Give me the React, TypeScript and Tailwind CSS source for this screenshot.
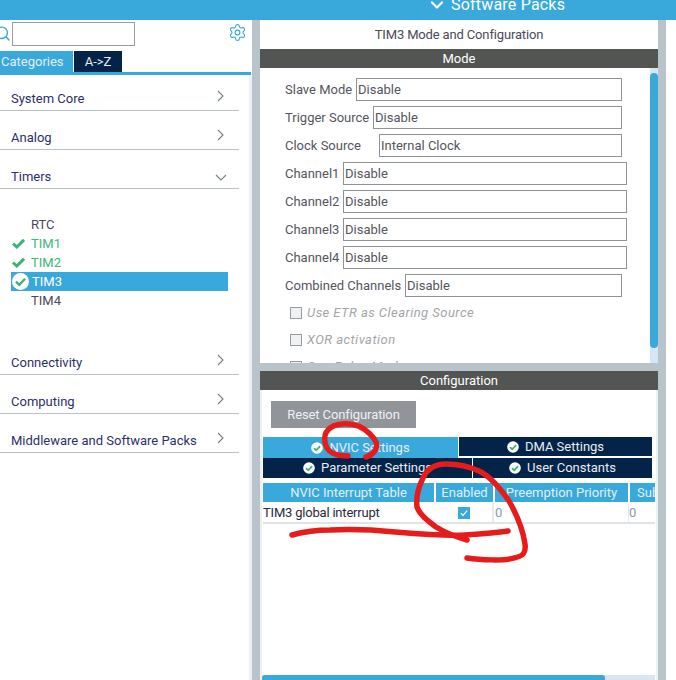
import React from "react";
import { Search, Settings, ChevronDown } from "lucide-react";

const font = { fontFamily: "Roboto, 'Liberation Sans', sans-serif" };

function Category({ name, open, mt }: { name: string; open?: boolean; mt: string }) {
  return (
    <div className={`flex h-[20px] w-[239px] items-center justify-between border-b border-[#b8c3ca] box-content pb-[1px] ${mt}`}>
      <span className="pl-[11px] text-[13px] text-[#2c2f6c]">{name}</span>
      {open ? (
        <svg viewBox="0 0 12 7" className="mr-[12px] h-[7px] w-[12px] text-[#7a7d80]">
          <path d="M1 1 L6 6 L11 1" fill="none" stroke="currentColor" strokeWidth="1.1" />
        </svg>
      ) : (
        <svg viewBox="0 0 7 12" className="mr-[15px] -mt-[6px] h-[12px] w-[7px] text-[#7a7d80]">
          <path d="M1 1 L6 6 L1 11" fill="none" stroke="currentColor" strokeWidth="1.1" />
        </svg>
      )}
    </div>
  );
}

function Check({ className }: { className: string }) {
  return (
    <svg viewBox="0 0 13 11" className={className}>
      <path d="M1 5.5 L4.8 9 L12 1.8" fill="none" stroke="#3cb371" strokeWidth="3" />
    </svg>
  );
}

function TimerRow({ name, state }: { name: string; state: "none" | "ok" | "selected" }) {
  const selected = state === "selected";
  return (
    <div className={`flex h-[19px] w-[217px] items-center ${selected ? "bg-[#39a9dc] text-white" : state === "ok" ? "text-[#3cb878]" : "text-[#4a4a5c]"}`}>
      <div className="flex w-[20px] justify-start">
        {state === "ok" && <Check className="ml-[1px] h-[11px] w-[13px]" />}
        {selected && (
          <svg viewBox="0 0 16 16" className="ml-[1px] h-[17px] w-[17px] shrink-0">
            <circle cx="8" cy="8" r="8" fill="white" />
            <path d="M3.8 8.2 L6.9 11.2 L12.3 5.4" fill="none" stroke="#3cb371" strokeWidth="2.2" />
          </svg>
        )}
      </div>
      <span className={`text-[13px] ${selected ? "ml-[1px]" : ""}`}>{name}</span>
    </div>
  );
}

function Field({ label, value, labelW, w }: { label: string; value: string; labelW: string; w: string }) {
  return (
    <div className="flex h-[23px] shrink-0 items-center pl-[25px]">
      <span className={`whitespace-nowrap text-[13px] text-[#555560] ${labelW}`}>{label}</span>
      <div className={`flex h-[23px] items-center border border-[#8f9396] pl-[1px] text-[13px] text-[#555560] ${w}`}>{value}</div>
    </div>
  );
}

function Option({ label }: { label: string }) {
  return (
    <div className="flex h-[27px] shrink-0 items-center pl-[30px]">
      <div className="h-[12px] w-[12px] border border-[#9a9da0] bg-[#eef0f2]" />
      <span className="ml-[5px] text-[13px] italic tracking-[0.45px] text-[#a3a5a8]">{label}</span>
    </div>
  );
}

function TabCheck() {
  return (
    <svg viewBox="0 0 12 12" className="h-[12px] w-[12px] shrink-0">
      <circle cx="6" cy="6" r="5.8" fill="white" />
      <path d="M3 6.2 L5.2 8.3 L9.1 4.1" fill="none" stroke="#3cb371" strokeWidth="1.8" />
    </svg>
  );
}

function Tab({ label, active, className }: { label: string; active?: boolean; className: string }) {
  return (
    <div className={`flex items-center justify-center gap-[6px] text-[13px] text-[#e6edf2] ${active ? "bg-[#39a9dc]" : "bg-[#032349]"} ${className}`}>
      <TabCheck />
      <span>{label}</span>
    </div>
  );
}

function Head({ label, className }: { label: string; className: string }) {
  return (
    <div className={`flex h-[19px] shrink-0 items-center justify-center overflow-hidden whitespace-nowrap bg-[#39a9dc] text-[13px] text-[#e2f0f8] ${className}`}>
      {label}
    </div>
  );
}

export default function App() {
  return (
    <div style={font} className="relative flex h-[680px] w-[676px] flex-col overflow-hidden bg-white">
      <header className="flex h-[20px] shrink-0 items-center overflow-hidden bg-[#39a9dc] pl-[427px] text-white">
        <ChevronDown size={20} strokeWidth={2.6} className="-mt-[10px]" />
        <span className="-mt-[10px] ml-[4px] text-[16px] leading-[20px] tracking-[0.2px]">Software Packs</span>
      </header>

      <div className="flex min-h-0 flex-1">
        {/* left panel */}
        <aside className="flex w-[252px] shrink-0 flex-col">
          <div className="flex h-[31px] shrink-0 items-start pt-[2px]">
            <Search size={17} strokeWidth={2} className="-ml-[6px] mt-[3px] shrink-0 text-[#39a9dc]" />
            <div className="ml-[1px] h-[24px] w-[123px] border border-[#9a9da0]" />
            <Settings size={19} strokeWidth={1.4} className="ml-[93px] mt-[1px] text-[#39a9dc]" />
          </div>
          <div className="flex h-[21px] shrink-0 text-[13px] text-[#e6edf2]">
            <div className="flex w-[73px] items-center bg-[#39a9dc] pl-[1px]">Categories</div>
            <div className="ml-[1px] flex w-[48px] items-center justify-center bg-[#032349]">A-&gt;Z</div>
          </div>
          <div className="h-[3px] w-[251px] shrink-0 bg-[#39a9dc]" />
          <div className="flex min-h-0 flex-1 flex-col border-r-[3px] border-[#eef0f2]">
            <Category name="System Core" mt="mt-[14px]" />
            <Category name="Analog" mt="mt-[17px]" />
            <Category name="Timers" open mt="mt-[17px]" />
            <div className="ml-[11px] mt-[26px] flex flex-col">
              <TimerRow name="RTC" state="none" />
              <TimerRow name="TIM1" state="ok" />
              <TimerRow name="TIM2" state="ok" />
              <TimerRow name="TIM3" state="selected" />
              <TimerRow name="TIM4" state="none" />
            </div>
            <Category name="Connectivity" mt="mt-[43px]" />
            <Category name="Computing" mt="mt-[17px]" />
            <Category name="Middleware and Software Packs" mt="mt-[17px]" />
          </div>
        </aside>

        <div className="w-[8px] shrink-0 bg-[#b8c3ca]" />

        {/* center column */}
        <main className="flex w-[398px] shrink-0 flex-col bg-[#b8c3ca]">
          <section className="flex h-[343px] shrink-0 flex-col overflow-hidden bg-white">
            <div className="flex h-[29px] shrink-0 items-center justify-center text-[13px] tracking-[-0.15px] text-[#4a4a5c]">TIM3 Mode and Configuration</div>
            <div className="flex h-[19px] shrink-0 items-center justify-center bg-[#535553] text-[13px] text-white">Mode</div>
            <div className="flex min-h-0 flex-1">
              <div className="flex min-w-0 flex-1 flex-col gap-[5px] overflow-hidden pt-[10px]">
                <Field label="Slave Mode" labelW="w-[71px]" w="w-[266px]" value="Disable" />
                <Field label="Trigger Source" labelW="w-[88px]" w="w-[249px]" value="Disable" />
                <Field label="Clock Source" labelW="w-[94px]" w="w-[243px]" value="Internal Clock" />
                <Field label="Channel1" labelW="w-[58px]" w="w-[284px]" value="Disable" />
                <Field label="Channel2" labelW="w-[58px]" w="w-[284px]" value="Disable" />
                <Field label="Channel3" labelW="w-[58px]" w="w-[284px]" value="Disable" />
                <Field label="Channel4" labelW="w-[58px]" w="w-[284px]" value="Disable" />
                <Field label="Combined Channels" labelW="w-[120px]" w="w-[217px]" value="Disable" />
                <div className="-mt-[3px] flex flex-col">
                  <Option label="Use ETR as Clearing Source" />
                  <Option label="XOR activation" />
                  <Option label="One Pulse Mode" />
                </div>
              </div>
              <div className="w-[8px] shrink-0 bg-[#d6e6f4] pt-[5px]">
                <div className="h-[275px] rounded-[4px] bg-[#39a9dc]" />
              </div>
            </div>
          </section>

          <section className="mt-[8px] flex min-h-0 flex-1 flex-col bg-white">
            <div className="flex h-[19px] shrink-0 items-center justify-center bg-[#535553] text-[13px] text-white">Configuration</div>
            <div className="flex min-h-0 flex-1 flex-col border-x-[2px] border-[#eef0f2] pr-[1px]">
              <button className="ml-[9px] mt-[11px] flex h-[27px] w-[145px] shrink-0 items-center justify-center bg-[#91959a] text-[13px] tracking-[-0.1px] text-[#eef0f2]">Reset Configuration</button>
              <div className="ml-[1px] mt-[9px] flex h-[21px] w-[389px] shrink-0 items-start">
                <Tab label="NVIC Settings" active className="h-[21px] w-[195px]" />
                <Tab label="DMA Settings" className="ml-[1px] h-[19px] w-[193px]" />
              </div>
              <div className="ml-[1px] flex h-[20px] w-[389px] shrink-0">
                <Tab label="Parameter Settings" className="h-[20px] w-[209px]" />
                <Tab label="User Constants" className="ml-[1px] h-[20px] w-[179px]" />
              </div>
              <div className="ml-[1px] mt-[5px] flex gap-[2px] overflow-hidden">
                <Head label="NVIC Interrupt Table" className="w-[171px]" />
                <Head label="Enabled" className="w-[57px]" />
                <Head label="Preemption Priority" className="w-[133px]" />
                <Head label="Subpriority" className="w-[25px] justify-start pl-[7px]" />
              </div>
              <div className="ml-[1px] flex h-[22px] shrink-0 items-center border-b-[2px] border-[#e0e4e8] pt-[1px] text-[13px]">
                <div className="w-[173px] tracking-[-0.2px] text-[#2a2a3c]">TIM3 global interrupt</div>
                <div className="flex h-full w-[56px] items-center justify-start pl-[22px]">
                  <div className="flex h-[12px] w-[12px] items-center justify-center bg-[#39a9dc]">
                    <svg viewBox="0 0 12 12" className="h-[12px] w-[12px]">
                      <path d="M2.8 6.2 L5 8.4 L9.2 3.6" fill="none" stroke="white" strokeWidth="1.2" />
                    </svg>
                  </div>
                </div>
                <div className="flex h-full w-[136px] items-center border-l-[2px] border-[#e8ebee] pl-[1px] text-[#8c9aa6]">0</div>
                <div className="flex h-full flex-1 items-center border-l-[1px] border-[#e8ebee] text-[#8c9aa6]">0</div>
              </div>
              <div className="min-h-0 flex-1" />
              <div className="h-[5px] shrink-0 bg-[#d6e6f4]">
                <div className="h-[5px] w-[343px] rounded-t-[3px] bg-[#39a9dc]" />
              </div>
            </div>
          </section>
        </main>

        <div className="w-[8px] shrink-0 bg-[#b8c3ca]" />
      </div>

      {/* hand-drawn annotation lying over the screenshot */}
      <svg className="pointer-events-none absolute left-0 top-0" width="676" height="680" fill="none" stroke="#e61c1c" strokeWidth="5.5" strokeLinecap="round" strokeLinejoin="round">
        <path d="M348 456 C336 456 326 452 325 442 C323 432 330 425 342 424 C354 423 364 428 370 434 C376 440 378 445 376 449 C373 454 370 456 366 457" />
        <path d="M467 558 C480 560 505 561 514 558 C524 556 526 552 525 544 C523 530 517 515 509 501 C500 488 490 476 479 471 C468 466 458 464 446 464 C434 464 427 469 423 478 C418 488 416 498 417 507 C420 515 428 521 436 527 C446 533 456 537 467 540" />
        <path d="M292 535 C303 532 315 530 330 530 C350 529 375 530 395 532 C420 534 445 536 465 535 C480 534 495 533 508 531" />
      </svg>
    </div>
  );
}
